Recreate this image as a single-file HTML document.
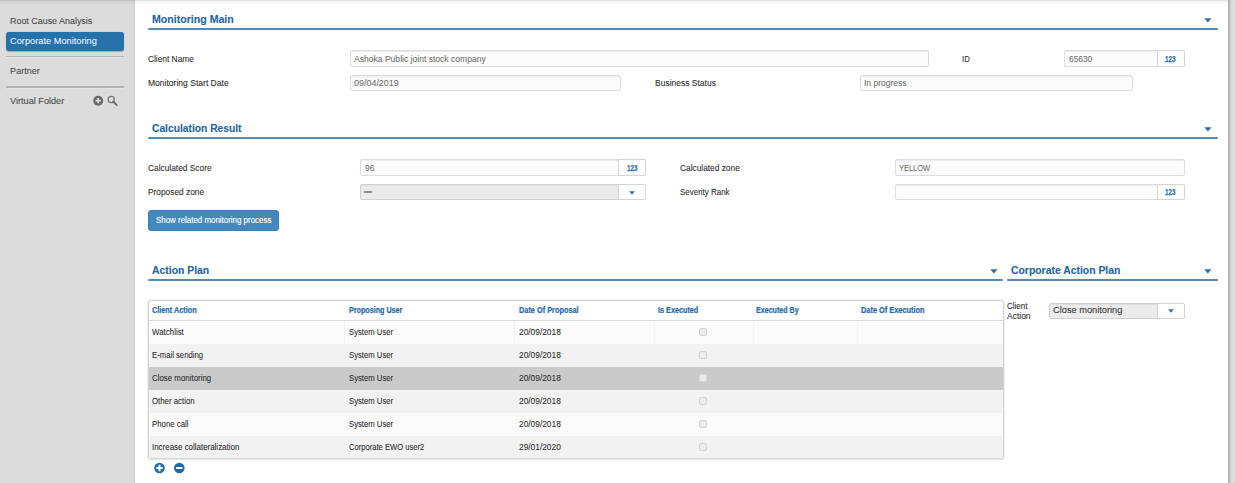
<!DOCTYPE html>
<html><head><meta charset="utf-8"><title>Corporate Monitoring</title>
<style>
html,body{margin:0;padding:0;background:#fff;width:1235px;height:483px;overflow:hidden}
body{position:relative;font-family:"Liberation Sans",sans-serif}
.t{position:absolute;white-space:nowrap;transform-origin:0 0}
.b{position:absolute}
</style></head><body>
<div class="b" style="left:0px;top:0px;width:135px;height:483px;background:#dcdcdc"></div>
<div class="b" style="left:132.5px;top:0px;width:2.5px;height:483px;background:linear-gradient(to right,#dcdcdc,#cdcdcd)"></div>
<div class="t" style="left:10.00px;top:17px;font-size:9.05px;line-height:9.05px;font-weight:400;color:#474747;transform:scaleX(0.9852);-webkit-text-stroke:0.07px #474747;">Root Cause Analysis</div>
<div class="b" style="left:6px;top:31.5px;width:118px;height:19.5px;background:#2672ab;border-radius:3px;box-shadow:0 0.5px 1px rgba(0,0,0,.25)"></div>
<div class="t" style="left:10.00px;top:37px;font-size:9.25px;line-height:9.25px;font-weight:400;color:#fff;">Corporate Monitoring</div>
<div class="b" style="left:6px;top:56px;width:118px;height:1.3px;background:#b3b3b3"></div>
<div class="b" style="left:6px;top:57.3px;width:118px;height:1px;background:#e4e4e4"></div>
<div class="t" style="left:10.10px;top:67px;font-size:9.05px;line-height:9.05px;font-weight:400;color:#474747;-webkit-text-stroke:0.07px #474747;">Partner</div>
<div class="b" style="left:6px;top:86.3px;width:118px;height:1.3px;background:#b3b3b3"></div>
<div class="b" style="left:6px;top:87.6px;width:118px;height:1px;background:#e4e4e4"></div>
<div class="t" style="left:10.10px;top:97px;font-size:9.1px;line-height:9.1px;font-weight:400;color:#474747;transform:scaleX(1.0058);-webkit-text-stroke:0.07px #474747;">Virtual Folder</div>
<svg class="b" style="left:92px;top:95px" width="28" height="12" viewBox="0 0 28 12"><circle cx="6.2" cy="5.7" r="5" fill="#6b6b6b"/><path d="M6.2 3.1v5.2M3.6 5.7h5.2" stroke="#dcdcdc" stroke-width="1.8"/><circle cx="19.2" cy="4.5" r="3.1" fill="none" stroke="#777" stroke-width="1.3"/><path d="M21.4 6.8l3.3 3.3" stroke="#6f6f6f" stroke-width="2" stroke-linecap="round"/></svg>
<div class="b" style="left:0;top:0;width:1235px;height:4px;background:linear-gradient(to bottom,rgba(0,0,0,.15),rgba(0,0,0,.05) 40%,rgba(0,0,0,0))"></div>
<div class="t" style="left:152.10px;top:15px;font-size:10.45px;line-height:10.45px;font-weight:700;color:#2064a2;transform:scaleX(1.0148);-webkit-text-stroke:0.1px #2064a2;">Monitoring Main</div>
<div class="b" style="left:148px;top:27.8px;width:1070px;height:1.9px;background:#4e8aba;border-radius:1px"></div>
<svg class="b" style="left:1204px;top:18px" width="8" height="5" viewBox="0 0 8 5"><path d="M0.3 0.3h7.2L3.9 4.6z" fill="#2c6eab"/></svg>
<div class="t" style="left:147.80px;top:55px;font-size:8.4px;line-height:8.4px;font-weight:400;color:#2a2a2a;transform:scaleX(0.9952);-webkit-text-stroke:0.07px #2a2a2a;">Client Name</div>
<div class="t" style="left:147.80px;top:79px;font-size:8.4px;line-height:8.4px;font-weight:400;color:#2a2a2a;transform:scaleX(1.0192);-webkit-text-stroke:0.07px #2a2a2a;">Monitoring Start Date</div>
<div class="b" style="left:350px;top:50px;width:578.5px;height:16.6px;background:#fcfcfc;border:1px solid #dcdcdc;border-radius:2px;box-sizing:border-box;box-shadow:inset 0 1px 1px rgba(0,0,0,.07)"></div>
<div class="t" style="left:354.00px;top:55px;font-size:8.6px;line-height:8.6px;font-weight:400;color:#6e6e6e;transform:scaleX(0.9954);-webkit-text-stroke:0.07px #6e6e6e;">Ashoka Public joint stock company</div>
<div class="b" style="left:350px;top:75px;width:270.5px;height:16px;background:#fcfcfc;border:1px solid #dcdcdc;border-radius:2px;box-sizing:border-box;box-shadow:inset 0 1px 1px rgba(0,0,0,.07)"></div>
<div class="t" style="left:354.00px;top:79px;font-size:8.6px;line-height:8.6px;font-weight:400;color:#6e6e6e;transform:scaleX(1.0409);-webkit-text-stroke:0.07px #6e6e6e;">09/04/2019</div>
<div class="t" style="left:961.90px;top:55px;font-size:8.4px;line-height:8.4px;font-weight:400;color:#2a2a2a;transform:scaleX(0.9247);-webkit-text-stroke:0.07px #2a2a2a;">ID</div>
<div class="b" style="left:1064px;top:50px;width:121px;height:16.6px;background:#fcfcfc;border:1px solid #dcdcdc;border-radius:2px;box-sizing:border-box;box-shadow:inset 0 1px 1px rgba(0,0,0,.07)"></div>
<div class="b" style="left:1156.5px;top:50px;width:28.5px;height:16.6px;background:#fff;border:1px solid #d4d4d4;border-radius:0 2px 2px 0;box-sizing:border-box"></div>
<div class="t" style="left:1068.50px;top:55px;font-size:8.6px;line-height:8.6px;font-weight:400;color:#6e6e6e;transform:scaleX(0.9702);-webkit-text-stroke:0.07px #6e6e6e;">65630</div>
<div class="t" style="left:1165.40px;top:55px;font-size:8.4px;line-height:8.4px;font-weight:700;color:#3273ad;transform:scaleX(0.7474);-webkit-text-stroke:0.25px #3273ad;">123</div>
<div class="t" style="left:654.90px;top:79px;font-size:8.4px;line-height:8.4px;font-weight:400;color:#2a2a2a;transform:scaleX(1.0140);-webkit-text-stroke:0.07px #2a2a2a;">Business Status</div>
<div class="b" style="left:859.5px;top:75px;width:273.5px;height:16px;background:#fcfcfc;border:1px solid #dcdcdc;border-radius:2px;box-sizing:border-box;box-shadow:inset 0 1px 1px rgba(0,0,0,.07)"></div>
<div class="t" style="left:863.70px;top:79px;font-size:8.6px;line-height:8.6px;font-weight:400;color:#6e6e6e;transform:scaleX(0.9861);-webkit-text-stroke:0.07px #6e6e6e;">In progress</div>
<div class="t" style="left:152.10px;top:124px;font-size:10.45px;line-height:10.45px;font-weight:700;color:#2064a2;transform:scaleX(0.9828);-webkit-text-stroke:0.1px #2064a2;">Calculation Result</div>
<div class="b" style="left:148px;top:136.8px;width:1070px;height:1.9px;background:#4e8aba;border-radius:1px"></div>
<svg class="b" style="left:1204px;top:127px" width="8" height="5" viewBox="0 0 8 5"><path d="M0.3 0.3h7.2L3.9 4.6z" fill="#2c6eab"/></svg>
<div class="t" style="left:147.90px;top:164px;font-size:8.4px;line-height:8.4px;font-weight:400;color:#2a2a2a;transform:scaleX(0.9966);-webkit-text-stroke:0.07px #2a2a2a;">Calculated Score</div>
<div class="t" style="left:147.90px;top:188px;font-size:8.4px;line-height:8.4px;font-weight:400;color:#2a2a2a;transform:scaleX(0.9950);-webkit-text-stroke:0.07px #2a2a2a;">Proposed zone</div>
<div class="b" style="left:360px;top:159.3px;width:286px;height:16.3px;background:#fcfcfc;border:1px solid #dcdcdc;border-radius:2px;box-sizing:border-box;box-shadow:inset 0 1px 1px rgba(0,0,0,.07)"></div>
<div class="b" style="left:618px;top:159.3px;width:28px;height:16.3px;background:#fff;border:1px solid #d4d4d4;border-radius:0 2px 2px 0;box-sizing:border-box"></div>
<div class="t" style="left:364.50px;top:164px;font-size:8.6px;line-height:8.6px;font-weight:400;color:#6e6e6e;transform:scaleX(0.9714);-webkit-text-stroke:0.07px #6e6e6e;">96</div>
<div class="t" style="left:627.10px;top:164px;font-size:8.4px;line-height:8.4px;font-weight:700;color:#3273ad;transform:scaleX(0.7474);-webkit-text-stroke:0.25px #3273ad;">123</div>
<div class="b" style="left:360px;top:184px;width:286px;height:16.2px;background:#ebebeb;border:1px solid #d0d0d0;border-radius:2px;box-sizing:border-box;box-shadow:inset 0 1px 1px rgba(0,0,0,.06)"></div>
<div class="b" style="left:618px;top:184px;width:28px;height:16.2px;background:#fff;border:1px solid #d4d4d4;border-radius:0 2px 2px 0;box-sizing:border-box"></div>
<svg class="b" style="left:629.0px;top:190.6px" width="6" height="4" viewBox="0 0 6 4"><path d="M0.2 0.2h5.6L3 3.8z" fill="#2a6eaa"/></svg>
<div class="b" style="left:364px;top:191.3px;width:8.3px;height:1.4px;background:#8e8e8e"></div>
<div class="t" style="left:679.80px;top:164px;font-size:8.4px;line-height:8.4px;font-weight:400;color:#2a2a2a;transform:scaleX(0.9950);-webkit-text-stroke:0.07px #2a2a2a;">Calculated zone</div>
<div class="t" style="left:679.80px;top:188px;font-size:8.4px;line-height:8.4px;font-weight:400;color:#2a2a2a;transform:scaleX(0.9501);-webkit-text-stroke:0.07px #2a2a2a;">Severity Rank</div>
<div class="b" style="left:895px;top:159.3px;width:290px;height:16.3px;background:#fcfcfc;border:1px solid #dcdcdc;border-radius:2px;box-sizing:border-box;box-shadow:inset 0 1px 1px rgba(0,0,0,.07)"></div>
<div class="t" style="left:899.30px;top:164px;font-size:8.6px;line-height:8.6px;font-weight:400;color:#6e6e6e;transform:scaleX(0.8636);-webkit-text-stroke:0.07px #6e6e6e;">YELLOW</div>
<div class="b" style="left:895px;top:184px;width:290px;height:16.2px;background:#fcfcfc;border:1px solid #dcdcdc;border-radius:2px;box-sizing:border-box;box-shadow:inset 0 1px 1px rgba(0,0,0,.07)"></div>
<div class="b" style="left:1156.5px;top:184px;width:28.5px;height:16.2px;background:#fff;border:1px solid #d4d4d4;border-radius:0 2px 2px 0;box-sizing:border-box"></div>
<div class="t" style="left:1165.40px;top:188px;font-size:8.4px;line-height:8.4px;font-weight:700;color:#3273ad;transform:scaleX(0.7474);-webkit-text-stroke:0.25px #3273ad;">123</div>
<div class="b" style="left:148px;top:210px;width:130.5px;height:21px;background:#4588be;border:1px solid #3c7eb4;border-radius:3px;box-sizing:border-box"></div>
<div class="t" style="left:155.80px;top:216px;font-size:8.3px;line-height:8.3px;font-weight:400;color:#fff;transform:scaleX(0.9546);-webkit-text-stroke:0.12px #fff;">Show related monitoring process</div>
<div class="t" style="left:152.00px;top:266px;font-size:10.45px;line-height:10.45px;font-weight:700;color:#2064a2;transform:scaleX(0.9959);-webkit-text-stroke:0.1px #2064a2;">Action Plan</div>
<div class="b" style="left:148px;top:278.8px;width:855px;height:1.9px;background:#4e8aba;border-radius:1px"></div>
<svg class="b" style="left:990px;top:269px" width="8" height="5" viewBox="0 0 8 5"><path d="M0.3 0.3h7.2L3.9 4.6z" fill="#2c6eab"/></svg>
<div class="t" style="left:1010.80px;top:266px;font-size:10.45px;line-height:10.45px;font-weight:700;color:#2064a2;transform:scaleX(0.9963);-webkit-text-stroke:0.1px #2064a2;">Corporate Action Plan</div>
<div class="b" style="left:1006.5px;top:278.8px;width:211.5px;height:1.9px;background:#4e8aba;border-radius:1px"></div>
<svg class="b" style="left:1204px;top:269px" width="8" height="5" viewBox="0 0 8 5"><path d="M0.3 0.3h7.2L3.9 4.6z" fill="#2c6eab"/></svg>
<div class="b" style="left:147.5px;top:300px;width:856px;height:159px;background:#fff;border:1px solid #d6d6d6;border-radius:3px;box-sizing:border-box;box-shadow:0 0 0.6px 0.6px rgba(0,0,0,.09),0 1px 2px rgba(0,0,0,.08)"></div>
<div class="b" style="left:148.5px;top:319.8px;width:854px;height:2px;background:#dadada"></div>
<div class="t" style="left:151.90px;top:306px;font-size:8.4px;line-height:8.4px;font-weight:700;color:#1f68a8;transform:scaleX(0.8694);-webkit-text-stroke:0.2px #1f68a8;">Client Action</div>
<div class="t" style="left:348.80px;top:306px;font-size:8.4px;line-height:8.4px;font-weight:700;color:#1f68a8;transform:scaleX(0.8558);-webkit-text-stroke:0.2px #1f68a8;">Proposing User</div>
<div class="t" style="left:519.00px;top:306px;font-size:8.4px;line-height:8.4px;font-weight:700;color:#1f68a8;transform:scaleX(0.8770);-webkit-text-stroke:0.2px #1f68a8;">Date Of Proposal</div>
<div class="t" style="left:657.90px;top:306px;font-size:8.4px;line-height:8.4px;font-weight:700;color:#1f68a8;transform:scaleX(0.8658);-webkit-text-stroke:0.2px #1f68a8;">Is Executed</div>
<div class="t" style="left:756.40px;top:306px;font-size:8.4px;line-height:8.4px;font-weight:700;color:#1f68a8;transform:scaleX(0.8476);-webkit-text-stroke:0.2px #1f68a8;">Executed By</div>
<div class="t" style="left:860.50px;top:306px;font-size:8.4px;line-height:8.4px;font-weight:700;color:#1f68a8;transform:scaleX(0.8817);-webkit-text-stroke:0.2px #1f68a8;">Date Of Execution</div>
<div class="b" style="left:148.5px;top:321.2px;width:854px;height:23px;background:#fbfbfb"></div>
<div class="b" style="left:344px;top:321.2px;width:1px;height:23px;background:#f3f3f3"></div>
<div class="b" style="left:514px;top:321.2px;width:1px;height:23px;background:#f3f3f3"></div>
<div class="b" style="left:653.5px;top:321.2px;width:1px;height:23px;background:#f3f3f3"></div>
<div class="b" style="left:752.8px;top:321.2px;width:1px;height:23px;background:#f3f3f3"></div>
<div class="b" style="left:857px;top:321.2px;width:1px;height:23px;background:#f3f3f3"></div>
<div class="t" style="left:152.40px;top:328px;font-size:8.8px;line-height:8.8px;font-weight:400;color:#2a2a2a;transform:scaleX(0.8994);-webkit-text-stroke:0.07px #2a2a2a;">Watchlist</div>
<div class="t" style="left:348.60px;top:328px;font-size:8.8px;line-height:8.8px;font-weight:400;color:#2a2a2a;transform:scaleX(0.8767);-webkit-text-stroke:0.07px #2a2a2a;">System User</div>
<div class="t" style="left:518.80px;top:328px;font-size:8.8px;line-height:8.8px;font-weight:400;color:#2a2a2a;transform:scaleX(0.9494);-webkit-text-stroke:0.07px #2a2a2a;">20/09/2018</div>
<div class="b" style="left:699px;top:328.3px;width:8px;height:7.6px;background:#ececec;border:1px solid #d2d2d2;border-radius:2px;box-sizing:border-box"></div>
<div class="b" style="left:148.5px;top:344.2px;width:854px;height:23px;background:#f2f2f2"></div>
<div class="t" style="left:152.40px;top:351px;font-size:8.8px;line-height:8.8px;font-weight:400;color:#2a2a2a;transform:scaleX(0.8766);-webkit-text-stroke:0.07px #2a2a2a;">E-mail sending</div>
<div class="t" style="left:348.60px;top:351px;font-size:8.8px;line-height:8.8px;font-weight:400;color:#2a2a2a;transform:scaleX(0.8767);-webkit-text-stroke:0.07px #2a2a2a;">System User</div>
<div class="t" style="left:518.80px;top:351px;font-size:8.8px;line-height:8.8px;font-weight:400;color:#2a2a2a;transform:scaleX(0.9494);-webkit-text-stroke:0.07px #2a2a2a;">20/09/2018</div>
<div class="b" style="left:699px;top:351.3px;width:8px;height:7.6px;background:#ececec;border:1px solid #d2d2d2;border-radius:2px;box-sizing:border-box"></div>
<div class="b" style="left:148.5px;top:367.2px;width:854px;height:23px;background:#cacaca"></div>
<div class="t" style="left:152.40px;top:374px;font-size:8.8px;line-height:8.8px;font-weight:400;color:#2a2a2a;transform:scaleX(0.8969);-webkit-text-stroke:0.07px #2a2a2a;">Close monitoring</div>
<div class="t" style="left:348.60px;top:374px;font-size:8.8px;line-height:8.8px;font-weight:400;color:#2a2a2a;transform:scaleX(0.8767);-webkit-text-stroke:0.07px #2a2a2a;">System User</div>
<div class="t" style="left:518.80px;top:374px;font-size:8.8px;line-height:8.8px;font-weight:400;color:#2a2a2a;transform:scaleX(0.9494);-webkit-text-stroke:0.07px #2a2a2a;">20/09/2018</div>
<div class="b" style="left:699px;top:374.3px;width:8px;height:7.6px;background:#ececec;border:1px solid #dadada;border-radius:2px;box-sizing:border-box"></div>
<div class="b" style="left:148.5px;top:390.2px;width:854px;height:23px;background:#f2f2f2"></div>
<div class="t" style="left:152.40px;top:397px;font-size:8.8px;line-height:8.8px;font-weight:400;color:#2a2a2a;transform:scaleX(0.8891);-webkit-text-stroke:0.07px #2a2a2a;">Other action</div>
<div class="t" style="left:348.60px;top:397px;font-size:8.8px;line-height:8.8px;font-weight:400;color:#2a2a2a;transform:scaleX(0.8767);-webkit-text-stroke:0.07px #2a2a2a;">System User</div>
<div class="t" style="left:518.80px;top:397px;font-size:8.8px;line-height:8.8px;font-weight:400;color:#2a2a2a;transform:scaleX(0.9494);-webkit-text-stroke:0.07px #2a2a2a;">20/09/2018</div>
<div class="b" style="left:699px;top:397.3px;width:8px;height:7.6px;background:#ececec;border:1px solid #d2d2d2;border-radius:2px;box-sizing:border-box"></div>
<div class="b" style="left:148.5px;top:413.2px;width:854px;height:23px;background:#fbfbfb"></div>
<div class="t" style="left:152.40px;top:420px;font-size:8.8px;line-height:8.8px;font-weight:400;color:#2a2a2a;transform:scaleX(0.8875);-webkit-text-stroke:0.07px #2a2a2a;">Phone call</div>
<div class="t" style="left:348.60px;top:420px;font-size:8.8px;line-height:8.8px;font-weight:400;color:#2a2a2a;transform:scaleX(0.8767);-webkit-text-stroke:0.07px #2a2a2a;">System User</div>
<div class="t" style="left:518.80px;top:420px;font-size:8.8px;line-height:8.8px;font-weight:400;color:#2a2a2a;transform:scaleX(0.9494);-webkit-text-stroke:0.07px #2a2a2a;">20/09/2018</div>
<div class="b" style="left:699px;top:420.3px;width:8px;height:7.6px;background:#ececec;border:1px solid #d2d2d2;border-radius:2px;box-sizing:border-box"></div>
<div class="b" style="left:148.5px;top:436.2px;width:854px;height:21.80000000000001px;background:#f2f2f2"></div>
<div class="t" style="left:152.40px;top:443px;font-size:8.8px;line-height:8.8px;font-weight:400;color:#2a2a2a;transform:scaleX(0.9017);-webkit-text-stroke:0.07px #2a2a2a;">Increase collateralization</div>
<div class="t" style="left:348.60px;top:443px;font-size:8.8px;line-height:8.8px;font-weight:400;color:#2a2a2a;transform:scaleX(0.8642);-webkit-text-stroke:0.07px #2a2a2a;">Corporate EWO user2</div>
<div class="t" style="left:518.80px;top:443px;font-size:8.8px;line-height:8.8px;font-weight:400;color:#2a2a2a;transform:scaleX(0.9494);-webkit-text-stroke:0.07px #2a2a2a;">29/01/2020</div>
<div class="b" style="left:699px;top:443.3px;width:8px;height:7.6px;background:#ececec;border:1px solid #d2d2d2;border-radius:2px;box-sizing:border-box"></div>
<svg class="b" style="left:153px;top:461px" width="34" height="14" viewBox="0 0 34 14"><circle cx="6.5" cy="7" r="5.3" fill="#1f6aa8"/><path d="M6.5 3.8v6.4M3.3 7h6.4" stroke="#fff" stroke-width="2"/><circle cx="26.3" cy="7" r="5.3" fill="#1f6aa8"/><path d="M23.1 7h6.4" stroke="#fff" stroke-width="2"/></svg>
<div class="t" style="left:1006.90px;top:302px;font-size:8.4px;line-height:8.4px;font-weight:400;color:#2a2a2a;transform:scaleX(0.9509);-webkit-text-stroke:0.07px #2a2a2a;">Client</div>
<div class="t" style="left:1006.90px;top:312px;font-size:8.4px;line-height:8.4px;font-weight:400;color:#2a2a2a;transform:scaleX(1.0119);-webkit-text-stroke:0.07px #2a2a2a;">Action</div>
<div class="b" style="left:1048.5px;top:302.7px;width:136px;height:16px;background:#ebebeb;border:1px solid #d0d0d0;border-radius:2px;box-sizing:border-box;box-shadow:inset 0 1px 1px rgba(0,0,0,.06)"></div>
<div class="b" style="left:1156.5px;top:302.7px;width:28.0px;height:16px;background:#fff;border:1px solid #d4d4d4;border-radius:0 2px 2px 0;box-sizing:border-box"></div>
<svg class="b" style="left:1167.5px;top:309.2px" width="6" height="4" viewBox="0 0 6 4"><path d="M0.2 0.2h5.6L3 3.8z" fill="#2a6eaa"/></svg>
<div class="t" style="left:1052.80px;top:306px;font-size:9.2px;line-height:9.2px;font-weight:400;color:#333;transform:scaleX(1.0069);-webkit-text-stroke:0.07px #333;">Close monitoring</div>
<div class="b" style="left:1228px;top:0px;width:7px;height:483px;background:linear-gradient(to right,#a9a9a9,#bdbdbd 22%,#d9d9d9 50%,#e2e2e2)"></div>
</body></html>
